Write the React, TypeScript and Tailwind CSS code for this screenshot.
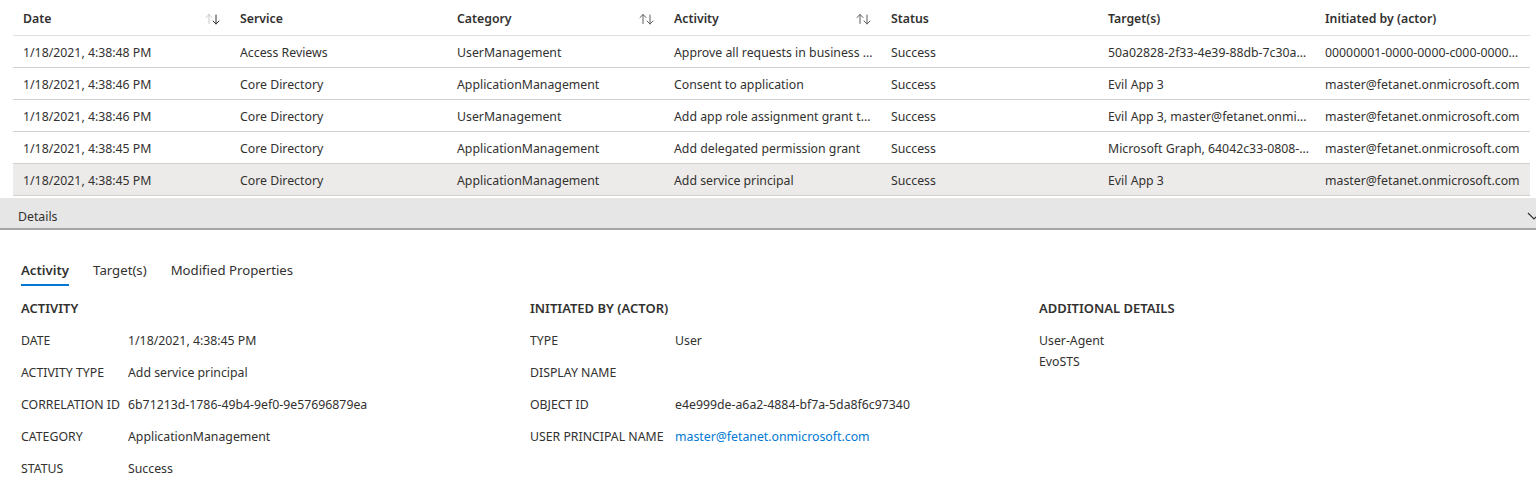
import React from 'react';

type Row = {
  date: string;
  service: string;
  category: string;
  activity: string;
  status: string;
  targets: string;
  actor: string;
};

const rows: Row[] = [
  {
    date: '1/18/2021, 4:38:48 PM',
    service: 'Access Reviews',
    category: 'UserManagement',
    activity: 'Approve all requests in business flow',
    status: 'Success',
    targets: '50a02828-2f33-4e39-88db-7c30a5c7e0f1',
    actor: '00000001-0000-0000-c000-000000000000',
  },
  {
    date: '1/18/2021, 4:38:46 PM',
    service: 'Core Directory',
    category: 'ApplicationManagement',
    activity: 'Consent to application',
    status: 'Success',
    targets: 'Evil App 3',
    actor: 'master@fetanet.onmicrosoft.com',
  },
  {
    date: '1/18/2021, 4:38:46 PM',
    service: 'Core Directory',
    category: 'UserManagement',
    activity: 'Add app role assignment grant to user',
    status: 'Success',
    targets: 'Evil App 3, master@fetanet.onmicrosoft.com',
    actor: 'master@fetanet.onmicrosoft.com',
  },
  {
    date: '1/18/2021, 4:38:45 PM',
    service: 'Core Directory',
    category: 'ApplicationManagement',
    activity: 'Add delegated permission grant',
    status: 'Success',
    targets: 'Microsoft Graph, 64042c33-0808-4b5a-9f1e',
    actor: 'master@fetanet.onmicrosoft.com',
  },
  {
    date: '1/18/2021, 4:38:45 PM',
    service: 'Core Directory',
    category: 'ApplicationManagement',
    activity: 'Add service principal',
    status: 'Success',
    targets: 'Evil App 3',
    actor: 'master@fetanet.onmicrosoft.com',
  },
];

function SortIcon({ dimUp }: { dimUp?: boolean }) {
  return (
    <svg width="18" height="14" viewBox="0 0 18 14" fill="none" strokeWidth="1" strokeLinecap="round">
      <g stroke={dimUp ? '#c8c6c4' : '#605e5c'}>
        <path d="M5 2.5v9" />
        <path d="M2 5.5l3-3 3 3" />
      </g>
      <g stroke={dimUp ? '#323130' : '#605e5c'}>
        <path d="M12 3v9" />
        <path d="M9 9l3 3 3-3" />
      </g>
    </svg>
  );
}

function HeaderCell({ label, sort, dimUp }: { label: string; sort?: boolean; dimUp?: boolean }) {
  return (
    <div className="flex items-center justify-between pl-[10px] pr-[8px] h-[35px] pt-[2px]">
      <span className="font-semibold leading-[20px] pt-[1px]">{label}</span>
      {sort && <SortIcon dimUp={dimUp} />}
    </div>
  );
}

function Cell({ children }: { children: React.ReactNode }) {
  return <div className="pl-[10px] pr-[6px] truncate h-[31px] leading-[33px]">{children}</div>;
}

function Field({ label, value, link, labelWidth }: { label: string; value?: string; link?: boolean; labelWidth: string }) {
  return (
    <div className="flex h-8 items-center">
      <div className={labelWidth}>{label}</div>
      {value && <div className={link ? 'text-[#0078d4]' : ''}>{value}</div>}
    </div>
  );
}

const cols = 'grid grid-cols-[217px_217px_217px_217px_217px_217px_215px]';

export default function App() {
  return (
    <div
      className="w-[1536px] h-[480px] overflow-hidden bg-white text-[12.3px] text-[#323130]"
      style={{ fontFamily: '"Segoe UI", "Noto Sans", "Open Sans", sans-serif' }}
    >
      <div className="ml-[13px] w-[1517px]">
        <div className={cols + ' border-b border-[#e1dfdd]'}>
          <HeaderCell label="Date" sort dimUp />
          <HeaderCell label="Service" />
          <HeaderCell label="Category" sort />
          <HeaderCell label="Activity" sort />
          <HeaderCell label="Status" />
          <HeaderCell label="Target(s)" />
          <HeaderCell label="Initiated by (actor)" />
        </div>
        {rows.map((r, i) => (
          <div
            key={i}
            className={cols + ' border-b border-[#d2d0ce] ' + (i === rows.length - 1 ? 'bg-[#edebe9]' : 'bg-white')}
          >
            <Cell>{r.date}</Cell>
            <Cell>{r.service}</Cell>
            <Cell>{r.category}</Cell>
            <Cell>{r.activity}</Cell>
            <Cell>{r.status}</Cell>
            <Cell>{r.targets}</Cell>
            <Cell>{r.actor}</Cell>
          </div>
        ))}
      </div>

      <div className="mt-[2px] h-[32px] bg-[#e6e6e6] border-b-2 border-[#a6a6a6] flex items-center justify-between pl-[18px] pt-[8px]">
        <span>Details</span>
        <svg width="14" height="10" viewBox="0 0 14 10" fill="none" className="mr-[-5px] mt-[-2px]">
          <path d="M1 2l6 6 6-6" stroke="#323130" strokeWidth="1.2" />
        </svg>
      </div>

      <div className="pl-[21px] pt-[31px]">
        <div className="flex gap-6 h-[28px] text-[13.2px]">
          <div className="relative font-semibold">
            Activity
            <div className="absolute left-0 right-0 top-[23px] h-[2px] bg-[#0078d4]" />
          </div>
          <div>Target(s)</div>
          <div>Modified Properties</div>
        </div>

        <div className="grid grid-cols-[509px_509px_1fr] mt-[4px]">
          <div>
            <div className="h-8 flex items-center font-semibold text-[13px]">ACTIVITY</div>
            <Field labelWidth="w-[107px]" label="DATE" value="1/18/2021, 4:38:45 PM" />
            <Field labelWidth="w-[107px]" label="ACTIVITY TYPE" value="Add service principal" />
            <Field labelWidth="w-[107px]" label="CORRELATION ID" value="6b71213d-1786-49b4-9ef0-9e57696879ea" />
            <Field labelWidth="w-[107px]" label="CATEGORY" value="ApplicationManagement" />
            <Field labelWidth="w-[107px]" label="STATUS" value="Success" />
          </div>
          <div>
            <div className="h-8 flex items-center font-semibold text-[13px]">INITIATED BY (ACTOR)</div>
            <Field labelWidth="w-[145px]" label="TYPE" value="User" />
            <Field labelWidth="w-[145px]" label="DISPLAY NAME" />
            <Field labelWidth="w-[145px]" label="OBJECT ID" value="e4e999de-a6a2-4884-bf7a-5da8f6c97340" />
            <Field labelWidth="w-[145px]" label="USER PRINCIPAL NAME" value="master@fetanet.onmicrosoft.com" link />
          </div>
          <div>
            <div className="h-8 flex items-center font-semibold text-[13px]">ADDITIONAL DETAILS</div>
            <div className="pt-[5px] leading-[21px]">
              <div>User-Agent</div>
              <div>EvoSTS</div>
            </div>
          </div>
        </div>
      </div>
    </div>
  );
}
